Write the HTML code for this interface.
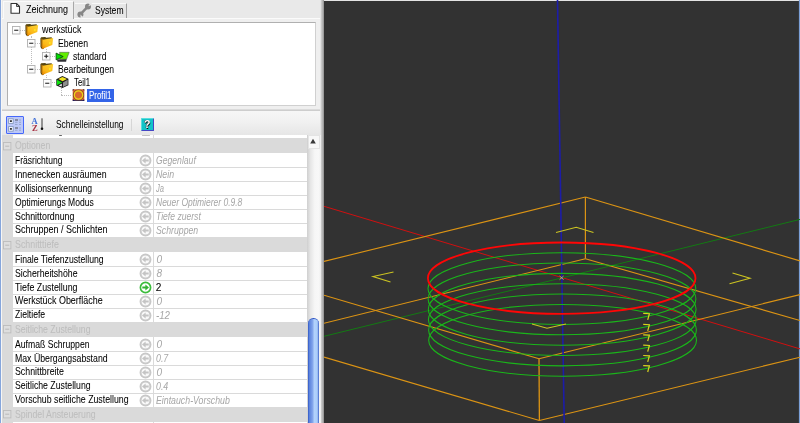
<!DOCTYPE html><html><head><meta charset="utf-8"><title>CAM</title><style>

html,body{margin:0;padding:0}
body{width:800px;height:423px;overflow:hidden;background:#ebebeb;font-family:"Liberation Sans", sans-serif;font-size:10.1px;color:#000;position:relative}
.abs{position:absolute}
.t{position:absolute;-webkit-text-stroke:0.05px currentColor;transform-origin:0 50%;white-space:nowrap;line-height:12px;height:12px}
.row{position:absolute;left:13px;width:294.3px;background:#fff}
.cat{position:absolute;left:2px;width:306px;background:#dadada}
.val{color:#a6a6a6;font-style:italic;-webkit-text-stroke:0 !important}
.cattxt{color:#bdbdbd}

</style></head><body><div id="wrap" style="position:absolute;left:0;top:0;width:800px;height:423px;will-change:transform">
<div class="abs" style="left:0;top:0;width:1px;height:423px;background:#86a6dc"></div>
<div class="abs" style="left:1px;top:0;width:1.5px;height:423px;background:#f6f6f6"></div>
<div class="abs" style="left:2px;top:0;width:318px;height:18px;background:#e9e9e9"></div>
<div class="abs" style="left:2px;top:17.5px;width:318px;height:92px;background:#efefef;border-top:1px solid #fbfbfb;box-sizing:border-box"></div>
<div class="abs" style="left:2.5px;top:1px;width:71px;height:17.5px;background:#efefef;border:1px solid #fafafa;border-bottom:none;border-right:1px solid #a8a8a8;box-sizing:border-box"></div>
<div class="abs" style="left:74.5px;top:2.5px;width:52.5px;height:15px;background:#e6e6e6;border-top:1px solid #f8f8f8;border-right:1px solid #a0a0a0;box-sizing:border-box"></div>
<svg class="abs" style="left:9px;top:2px" width="13" height="13" viewBox="0 0 13 13"><path d="M2 1.5 H7.5 L10.5 4.5 V11.2 H2 Z" fill="#fff" stroke="#333" stroke-width="1.1" stroke-linejoin="round"/><path d="M7.5 1.5 V4.5 H10.5" fill="none" stroke="#333" stroke-width="0.9"/></svg>
<svg class="abs" style="left:76px;top:3px" width="16" height="16" viewBox="0 0 16 16"><path d="M4.6 11.2 L11.8 3.7" stroke="#878787" stroke-width="2.5"/><circle cx="12" cy="3.4" r="3" fill="#878787"/><path d="M12.3 3.2 L14.6 -0.6 L16.6 1.4 Z" fill="#e6e6e6"/><circle cx="4.4" cy="11.4" r="3" fill="#878787"/><path d="M4.4 11.6 L4.6 15.5 L7.6 14.6 Z" fill="#e6e6e6"/></svg>
<span id="tab1" class="t " style="left:26.00px;top:4.00px;transform:scaleX(0.8910);">Zeichnung</span>
<span id="tab2" class="t " style="left:95.30px;top:5.30px;transform:scaleX(0.8468);">System</span>
<div class="abs" style="left:7px;top:21.5px;width:308.5px;height:84px;background:#fff;border:1px solid #b0b0b0;border-right-color:#d0d0d0;border-bottom-color:#d0d0d0;box-sizing:border-box"></div>
<div class="abs" style="left:20.0px;top:29.8px;height:0;width:5.0px;border-top:1px dotted #bdbdbd"></div>
<div class="abs" style="left:30.5px;top:36.0px;width:0;height:30.4px;border-left:1px dotted #bdbdbd"></div>
<div class="abs" style="left:35.0px;top:42.9px;height:0;width:5.0px;border-top:1px dotted #bdbdbd"></div>
<div class="abs" style="left:35.0px;top:68.9px;height:0;width:5.0px;border-top:1px dotted #bdbdbd"></div>
<div class="abs" style="left:45.8px;top:49.0px;width:0;height:3.4px;border-left:1px dotted #bdbdbd"></div>
<div class="abs" style="left:50.0px;top:55.9px;height:0;width:5.0px;border-top:1px dotted #bdbdbd"></div>
<div class="abs" style="left:45.8px;top:75.0px;width:0;height:3.3px;border-left:1px dotted #bdbdbd"></div>
<div class="abs" style="left:50.0px;top:81.8px;height:0;width:5.0px;border-top:1px dotted #bdbdbd"></div>
<div class="abs" style="left:61.0px;top:88.0px;width:0;height:7.2px;border-left:1px dotted #bdbdbd"></div>
<div class="abs" style="left:61.0px;top:94.7px;height:0;width:10.0px;border-top:1px dotted #bdbdbd"></div>
<svg class="abs" style="left:11.6px;top:25.9px" width="9" height="9" viewBox="0 0 9 9"><rect x="0.5" y="0.5" width="7.5" height="7.5" fill="#fdfdfd" stroke="#b0b0b0" stroke-width="0.9"/><path d="M2.2 4.25 H6.3" stroke="#202020" stroke-width="1.05"/></svg>
<svg class="abs" style="left:26.9px;top:38.9px" width="9" height="9" viewBox="0 0 9 9"><rect x="0.5" y="0.5" width="7.5" height="7.5" fill="#fdfdfd" stroke="#b0b0b0" stroke-width="0.9"/><path d="M2.2 4.25 H6.3" stroke="#202020" stroke-width="1.05"/></svg>
<svg class="abs" style="left:42.4px;top:52.0px" width="9" height="9" viewBox="0 0 9 9"><rect x="0.5" y="0.5" width="7.5" height="7.5" fill="#fdfdfd" stroke="#b0b0b0" stroke-width="0.9"/><path d="M2.2 4.25 H6.3" stroke="#202020" stroke-width="1.05"/><path d="M4.25 2.2 V6.3" stroke="#202020" stroke-width="1.05"/></svg>
<svg class="abs" style="left:26.9px;top:65.1px" width="9" height="9" viewBox="0 0 9 9"><rect x="0.5" y="0.5" width="7.5" height="7.5" fill="#fdfdfd" stroke="#b0b0b0" stroke-width="0.9"/><path d="M2.2 4.25 H6.3" stroke="#202020" stroke-width="1.05"/></svg>
<svg class="abs" style="left:42.6px;top:78.5px" width="9" height="9" viewBox="0 0 9 9"><rect x="0.5" y="0.5" width="7.5" height="7.5" fill="#fdfdfd" stroke="#b0b0b0" stroke-width="0.9"/><path d="M2.2 4.25 H6.3" stroke="#202020" stroke-width="1.05"/></svg>
<svg class="abs" style="left:24.5px;top:22.8px" width="15" height="14" viewBox="0 0 15 14"><defs><linearGradient id="fg274" x1="0.1" y1="1" x2="0.8" y2="0"><stop offset="0" stop-color="#ee8800"/><stop offset="0.35" stop-color="#fbb818"/><stop offset="1" stop-color="#ffd030"/></linearGradient></defs><path d="M0.4 2.2 L1.2 1.2 L5.2 0.9 L6.2 1.8 L11.6 1.2 L12.2 3 L3 13.2 L1.6 12.8 L0.5 11 Z" fill="#54440f"/><path d="M1.2 2.6 L3 3.2 L2.4 12 L1.2 10.6 Z" fill="#a86a08"/><path d="M2.5 3.7 L13.2 1.9 L12.3 9 L2.1 12.9 Z" fill="url(#fg274)"/><circle cx="9.9" cy="7" r="0.9" fill="#ffee20"/></svg>
<svg class="abs" style="left:39.5px;top:35.9px" width="15" height="14" viewBox="0 0 15 14"><defs><linearGradient id="fg437" x1="0.1" y1="1" x2="0.8" y2="0"><stop offset="0" stop-color="#ee8800"/><stop offset="0.35" stop-color="#fbb818"/><stop offset="1" stop-color="#ffd030"/></linearGradient></defs><path d="M0.4 2.2 L1.2 1.2 L5.2 0.9 L6.2 1.8 L11.6 1.2 L12.2 3 L3 13.2 L1.6 12.8 L0.5 11 Z" fill="#54440f"/><path d="M1.2 2.6 L3 3.2 L2.4 12 L1.2 10.6 Z" fill="#a86a08"/><path d="M2.5 3.7 L13.2 1.9 L12.3 9 L2.1 12.9 Z" fill="url(#fg437)"/><circle cx="9.9" cy="7" r="0.9" fill="#ffee20"/></svg>
<svg class="abs" style="left:39.5px;top:61.9px" width="15" height="14" viewBox="0 0 15 14"><defs><linearGradient id="fg463" x1="0.1" y1="1" x2="0.8" y2="0"><stop offset="0" stop-color="#ee8800"/><stop offset="0.35" stop-color="#fbb818"/><stop offset="1" stop-color="#ffd030"/></linearGradient></defs><path d="M0.4 2.2 L1.2 1.2 L5.2 0.9 L6.2 1.8 L11.6 1.2 L12.2 3 L3 13.2 L1.6 12.8 L0.5 11 Z" fill="#54440f"/><path d="M1.2 2.6 L3 3.2 L2.4 12 L1.2 10.6 Z" fill="#a86a08"/><path d="M2.5 3.7 L13.2 1.9 L12.3 9 L2.1 12.9 Z" fill="url(#fg463)"/><circle cx="9.9" cy="7" r="0.9" fill="#ffee20"/></svg>
<svg class="abs" style="left:54.5px;top:49.9px" width="15" height="13" viewBox="0 0 15 13"><path d="M2 9.6 L11.6 9 L11.1 11.7 L2.6 11.7 Z" fill="#2e2e34"/><path d="M4.6 2.3 L14.2 2.3 L11.6 9.2 L5 9.2 Z" fill="#62ee00" stroke="#4a4456" stroke-width="0.5"/><path d="M1.1 3.1 L1.1 9.9 L8.2 6.6 Z" fill="#00de00" stroke="#0a3c0a" stroke-width="0.8" stroke-linejoin="round"/></svg>
<svg class="abs" style="left:54.5px;top:75.3px" width="15" height="14" viewBox="0 0 15 14"><path d="M1.3 4.2 L7.4 1.1 L13.4 3.8 L13.4 10.2 L7.5 12.9 L1.3 10.4 Z" fill="#1c1c1c"/><path d="M3.4 4.1 L7.4 1.9 L12 4 L7.5 6.2 Z" fill="#f2e21e"/><path d="M1.9 4.8 L1.9 10.3 L7.1 7.6 Z" fill="#10e010"/><path d="M8 7.4 L12.7 4.8 L12.7 9.7 L8 12 Z" fill="#8e8e8e"/><path d="M3.6 10.4 L6.8 8.8 L6.8 11.6 Z" fill="#e8e8e8"/></svg>
<svg class="abs" style="left:71.5px;top:88.2px" width="14" height="14" viewBox="0 0 14 14"><rect x="0.7" y="1.3" width="11.6" height="11.6" fill="#d4622a"/><path d="M0.7 12.9 H12.3 V11.2 L10.4 12.2 H2.6 L0.7 11.2 Z" fill="#1c1c5c"/><path d="M0.7 1.3 H2.4 L0.7 3 Z M12.3 1.3 V3 L10.6 1.3 Z" fill="#3a3050"/><circle cx="6.5" cy="7" r="5.2" fill="none" stroke="#4a3428" stroke-width="0.6"/><circle cx="6.5" cy="7" r="4.2" fill="#d8682e" stroke="#ecd418" stroke-width="1.2"/></svg>
<span id="tr0" class="t " style="left:42.00px;top:24.40px;transform:scaleX(0.8758);">werkstück</span>
<span id="tr1" class="t " style="left:57.50px;top:37.80px;transform:scaleX(0.8618);">Ebenen</span>
<span id="tr2" class="t " style="left:72.50px;top:50.80px;transform:scaleX(0.8528);">standard</span>
<span id="tr3" class="t " style="left:58.00px;top:64.00px;transform:scaleX(0.8527);">Bearbeitungen</span>
<span id="tr4" class="t " style="left:73.80px;top:77.10px;transform:scaleX(0.7705);">Teil1</span>
<div class="abs" style="left:86.8px;top:89px;width:27.2px;height:12.5px;background:#3364e8"></div>
<span id="tr5" class="t " style="left:89.00px;top:89.90px;transform:scaleX(0.7860);color:#fff">Profil1</span>
<div class="abs" style="left:2px;top:108.8px;width:318px;height:3.2px;background:linear-gradient(#e4e4e4,#cccccc 45%,#cfcfcf 60%,#e6e6e6)"></div>
<div class="abs" style="left:2px;top:111.2px;width:318px;height:23.5px;background:linear-gradient(#f6f6f6,#f0f0f0 50%,#e6e6e6)"></div>
<div class="abs" style="left:5.8px;top:116px;width:18.7px;height:18px;background:#bcc8f8;border:1px solid #4668fa;box-sizing:border-box;border-radius:1px"></div>
<svg class="abs" style="left:7px;top:117px" width="17" height="16" viewBox="0 0 17 16"><rect x="1.6" y="1.8" width="4.6" height="4.6" fill="#eef2ff" stroke="#7f93b8" stroke-width="0.8"/><rect x="2.9" y="3.3" width="2" height="1.6" fill="#222"/><rect x="1.6" y="9.6" width="4.6" height="4.6" fill="#eef2ff" stroke="#7f93b8" stroke-width="0.8"/><rect x="2.9" y="11.1" width="2" height="1.6" fill="#222"/><path d="M8 3 H11 M8 11 H11" stroke="#444" stroke-width="0.9"/><path d="M8 5.3 H10.5 M12 3 H14 M12 5.3 H14 M8 7.5 H10.5 M12 7.5 H14 M8 13.2 H10.5 M12 11 H14 M12 13.2 H14" stroke="#93a3c8" stroke-width="0.9"/></svg>
<span class="t" style="left:31.5px;top:116.2px;font-family:'Liberation Serif',serif;font-weight:bold;font-size:8.5px;color:#3f6fd8;line-height:10px;height:10px">A</span>
<span class="t" style="left:32px;top:122.8px;font-family:'Liberation Serif',serif;font-weight:bold;font-size:8.5px;color:#a83244;line-height:10px;height:10px">Z</span>
<svg class="abs" style="left:39px;top:117px" width="6" height="15" viewBox="0 0 6 15"><path d="M3 1.3 V12" stroke="#222" stroke-width="0.9"/><circle cx="3" cy="11.7" r="1.3" fill="#111"/></svg>
<span id="tb" class="t " style="left:55.50px;top:119.40px;transform:scaleX(0.8295);-webkit-text-stroke:0">Schnelleinstellung</span>
<div class="abs" style="left:131.2px;top:119px;width:1px;height:12px;background:#d6d6d6"></div>
<div class="abs" style="left:141px;top:118.2px;width:12.6px;height:12.5px;background:#12c4c8;border-right:1.2px solid #4646c4;border-bottom:1.2px solid #4646c4;border-top:0.6px solid #5adcdc;border-left:0.6px solid #5adcdc;box-sizing:border-box;border-radius:1px"></div>
<span class="t" style="left:143.9px;top:118.4px;font-weight:bold;font-size:10.5px;color:#fff;text-shadow:0.7px 0.7px 0 #111,-0.3px 0 0 #333;-webkit-text-stroke:0">?</span>
<div class="abs" style="left:2px;top:134.7px;width:305.3px;height:289px;background:#dadada"></div>
<div class="row" style="top:134.7px;height:3.3px"></div>
<div class="abs" style="left:59px;top:135.2px;width:3px;height:1.2px;background:#666;border-radius:1px"></div>
<div class="abs" style="left:141.5px;top:134.7px;width:8.5px;height:1.8px;border:1px solid #c4c4c4;border-top:none;border-radius:0 0 5px 5px;box-sizing:border-box"></div>
<svg class="abs" style="left:3px;top:141.6px" width="9" height="9" viewBox="0 0 9 9"><rect x="0.5" y="0.5" width="7.4" height="7.4" fill="#dedede" stroke="#bcbcbc" stroke-width="0.9"/><path d="M2.2 4.2 H6.2" stroke="#b4b4b4" stroke-width="0.9"/></svg>
<span id="c0" class="t cattxt" style="left:14.70px;top:139.80px;transform:scaleX(0.8616);">Optionen</span>
<div class="row" style="top:153.20px;height:14.00px"></div>
<span id="n1" class="t " style="left:14.60px;top:154.70px;transform:scaleX(0.8448);">Fräsrichtung</span>
<svg class="abs" style="left:139.3px;top:154.3px" width="13" height="13" viewBox="0 0 13 13"><circle cx="6.5" cy="6.5" r="4.95" fill="#f9f9f9" stroke="#c8c8c8" stroke-width="2"/><path d="M9.7 6.5 H5.4" fill="none" stroke="#c4c4c4" stroke-width="2"/><path d="M6.6 3.4 L3 6.5 L6.6 9.6 Z" fill="#c4c4c4"/></svg>
<span id="v1" class="t val" style="left:156.40px;top:155.10px;transform:scaleX(0.8542);">Gegenlauf</span>
<div class="row" style="top:167.15px;height:14.00px"></div>
<div class="abs" style="left:13px;top:167.00px;width:294.3px;height:1px;background:#dadada"></div>
<span id="n2" class="t " style="left:14.60px;top:168.65px;transform:scaleX(0.8673);">Innenecken ausräumen</span>
<svg class="abs" style="left:139.3px;top:168.2px" width="13" height="13" viewBox="0 0 13 13"><circle cx="6.5" cy="6.5" r="4.95" fill="#f9f9f9" stroke="#c8c8c8" stroke-width="2"/><path d="M9.7 6.5 H5.4" fill="none" stroke="#c4c4c4" stroke-width="2"/><path d="M6.6 3.4 L3 6.5 L6.6 9.6 Z" fill="#c4c4c4"/></svg>
<span id="v2" class="t val" style="left:156.40px;top:169.05px;transform:scaleX(0.8716);">Nein</span>
<div class="row" style="top:181.10px;height:14.00px"></div>
<div class="abs" style="left:13px;top:180.95px;width:294.3px;height:1px;background:#dadada"></div>
<span id="n3" class="t " style="left:14.60px;top:182.60px;transform:scaleX(0.8534);">Kollisionserkennung</span>
<svg class="abs" style="left:139.3px;top:182.2px" width="13" height="13" viewBox="0 0 13 13"><circle cx="6.5" cy="6.5" r="4.95" fill="#f9f9f9" stroke="#c8c8c8" stroke-width="2"/><path d="M9.7 6.5 H5.4" fill="none" stroke="#c4c4c4" stroke-width="2"/><path d="M6.6 3.4 L3 6.5 L6.6 9.6 Z" fill="#c4c4c4"/></svg>
<span id="v3" class="t val" style="left:156.40px;top:183.00px;transform:scaleX(0.7496);">Ja</span>
<div class="row" style="top:195.05px;height:14.00px"></div>
<div class="abs" style="left:13px;top:194.90px;width:294.3px;height:1px;background:#dadada"></div>
<span id="n4" class="t " style="left:14.60px;top:196.55px;transform:scaleX(0.8450);">Optimierungs Modus</span>
<svg class="abs" style="left:139.3px;top:196.1px" width="13" height="13" viewBox="0 0 13 13"><circle cx="6.5" cy="6.5" r="4.95" fill="#f9f9f9" stroke="#c8c8c8" stroke-width="2"/><path d="M9.7 6.5 H5.4" fill="none" stroke="#c4c4c4" stroke-width="2"/><path d="M6.6 3.4 L3 6.5 L6.6 9.6 Z" fill="#c4c4c4"/></svg>
<span id="v4" class="t val" style="left:156.40px;top:196.95px;transform:scaleX(0.8405);">Neuer Optimierer 0.9.8</span>
<div class="row" style="top:209.00px;height:14.00px"></div>
<div class="abs" style="left:13px;top:208.85px;width:294.3px;height:1px;background:#dadada"></div>
<span id="n5" class="t " style="left:14.60px;top:210.50px;transform:scaleX(0.8747);">Schnittordnung</span>
<svg class="abs" style="left:139.3px;top:210.1px" width="13" height="13" viewBox="0 0 13 13"><circle cx="6.5" cy="6.5" r="4.95" fill="#f9f9f9" stroke="#c8c8c8" stroke-width="2"/><path d="M9.7 6.5 H5.4" fill="none" stroke="#c4c4c4" stroke-width="2"/><path d="M6.6 3.4 L3 6.5 L6.6 9.6 Z" fill="#c4c4c4"/></svg>
<span id="v5" class="t val" style="left:156.40px;top:210.90px;transform:scaleX(0.8508);">Tiefe zuerst</span>
<div class="row" style="top:222.95px;height:14.00px"></div>
<div class="abs" style="left:13px;top:222.80px;width:294.3px;height:1px;background:#dadada"></div>
<span id="n6" class="t " style="left:14.60px;top:224.45px;transform:scaleX(0.8920);">Schruppen / Schlichten</span>
<svg class="abs" style="left:139.3px;top:224.0px" width="13" height="13" viewBox="0 0 13 13"><circle cx="6.5" cy="6.5" r="4.95" fill="#f9f9f9" stroke="#c8c8c8" stroke-width="2"/><path d="M9.7 6.5 H5.4" fill="none" stroke="#c4c4c4" stroke-width="2"/><path d="M6.6 3.4 L3 6.5 L6.6 9.6 Z" fill="#c4c4c4"/></svg>
<span id="v6" class="t val" style="left:156.40px;top:224.85px;transform:scaleX(0.8643);">Schruppen</span>
<svg class="abs" style="left:3px;top:240.5px" width="9" height="9" viewBox="0 0 9 9"><rect x="0.5" y="0.5" width="7.4" height="7.4" fill="#dedede" stroke="#bcbcbc" stroke-width="0.9"/><path d="M2.2 4.2 H6.2" stroke="#b4b4b4" stroke-width="0.9"/></svg>
<span id="c7" class="t cattxt" style="left:14.70px;top:238.70px;transform:scaleX(0.8771);">Schnitttiefe</span>
<div class="row" style="top:252.10px;height:14.00px"></div>
<span id="n8" class="t " style="left:14.60px;top:253.60px;transform:scaleX(0.8581);">Finale Tiefenzustellung</span>
<svg class="abs" style="left:139.3px;top:253.2px" width="13" height="13" viewBox="0 0 13 13"><circle cx="6.5" cy="6.5" r="4.95" fill="#f9f9f9" stroke="#c8c8c8" stroke-width="2"/><path d="M9.7 6.5 H5.4" fill="none" stroke="#c4c4c4" stroke-width="2"/><path d="M6.6 3.4 L3 6.5 L6.6 9.6 Z" fill="#c4c4c4"/></svg>
<span id="v8" class="t val" style="left:156.40px;top:254.00px;">0</span>
<div class="row" style="top:266.05px;height:14.00px"></div>
<div class="abs" style="left:13px;top:265.90px;width:294.3px;height:1px;background:#dadada"></div>
<span id="n9" class="t " style="left:14.60px;top:267.55px;transform:scaleX(0.8634);">Sicherheitshöhe</span>
<svg class="abs" style="left:139.3px;top:267.1px" width="13" height="13" viewBox="0 0 13 13"><circle cx="6.5" cy="6.5" r="4.95" fill="#f9f9f9" stroke="#c8c8c8" stroke-width="2"/><path d="M9.7 6.5 H5.4" fill="none" stroke="#c4c4c4" stroke-width="2"/><path d="M6.6 3.4 L3 6.5 L6.6 9.6 Z" fill="#c4c4c4"/></svg>
<span id="v9" class="t val" style="left:156.40px;top:267.95px;">8</span>
<div class="row" style="top:280.00px;height:14.00px"></div>
<div class="abs" style="left:13px;top:279.85px;width:294.3px;height:1px;background:#dadada"></div>
<span id="n10" class="t " style="left:14.60px;top:281.50px;transform:scaleX(0.8747);">Tiefe Zustellung</span>
<svg class="abs" style="left:139.3px;top:281.1px" width="13" height="13" viewBox="0 0 13 13"><circle cx="6.5" cy="6.5" r="5.1" fill="#fff" stroke="#3cbc3c" stroke-width="1.7"/><path d="M3.3 6.5 H7.6" fill="none" stroke="#34b434" stroke-width="2"/><path d="M6.4 3.4 L10 6.5 L6.4 9.6 Z" fill="#34b434"/></svg>
<span id="v10" class="t " style="left:155.70px;top:281.50px;color:#000">2</span>
<div class="row" style="top:293.95px;height:14.00px"></div>
<div class="abs" style="left:13px;top:293.80px;width:294.3px;height:1px;background:#dadada"></div>
<span id="n11" class="t " style="left:14.60px;top:295.45px;transform:scaleX(0.8839);">Werkstück Oberfläche</span>
<svg class="abs" style="left:139.3px;top:295.0px" width="13" height="13" viewBox="0 0 13 13"><circle cx="6.5" cy="6.5" r="4.95" fill="#f9f9f9" stroke="#c8c8c8" stroke-width="2"/><path d="M9.7 6.5 H5.4" fill="none" stroke="#c4c4c4" stroke-width="2"/><path d="M6.6 3.4 L3 6.5 L6.6 9.6 Z" fill="#c4c4c4"/></svg>
<span id="v11" class="t val" style="left:156.40px;top:295.85px;">0</span>
<div class="row" style="top:307.90px;height:14.00px"></div>
<div class="abs" style="left:13px;top:307.75px;width:294.3px;height:1px;background:#dadada"></div>
<span id="n12" class="t " style="left:14.60px;top:309.40px;transform:scaleX(0.8516);">Zieltiefe</span>
<svg class="abs" style="left:139.3px;top:309.0px" width="13" height="13" viewBox="0 0 13 13"><circle cx="6.5" cy="6.5" r="4.95" fill="#f9f9f9" stroke="#c8c8c8" stroke-width="2"/><path d="M9.7 6.5 H5.4" fill="none" stroke="#c4c4c4" stroke-width="2"/><path d="M6.6 3.4 L3 6.5 L6.6 9.6 Z" fill="#c4c4c4"/></svg>
<span id="v12" class="t val" style="left:156.40px;top:309.80px;transform:scaleX(0.9593);">-12</span>
<svg class="abs" style="left:3px;top:325.4px" width="9" height="9" viewBox="0 0 9 9"><rect x="0.5" y="0.5" width="7.4" height="7.4" fill="#dedede" stroke="#bcbcbc" stroke-width="0.9"/><path d="M2.2 4.2 H6.2" stroke="#b4b4b4" stroke-width="0.9"/></svg>
<span id="c13" class="t cattxt" style="left:14.70px;top:323.65px;transform:scaleX(0.8625);">Seitliche Zustellung</span>
<div class="row" style="top:337.05px;height:14.00px"></div>
<span id="n14" class="t " style="left:14.60px;top:338.55px;transform:scaleX(0.8566);">Aufmaß Schruppen</span>
<svg class="abs" style="left:139.3px;top:338.1px" width="13" height="13" viewBox="0 0 13 13"><circle cx="6.5" cy="6.5" r="4.95" fill="#f9f9f9" stroke="#c8c8c8" stroke-width="2"/><path d="M9.7 6.5 H5.4" fill="none" stroke="#c4c4c4" stroke-width="2"/><path d="M6.6 3.4 L3 6.5 L6.6 9.6 Z" fill="#c4c4c4"/></svg>
<span id="v14" class="t val" style="left:156.40px;top:338.95px;">0</span>
<div class="row" style="top:351.00px;height:14.00px"></div>
<div class="abs" style="left:13px;top:350.85px;width:294.3px;height:1px;background:#dadada"></div>
<span id="n15" class="t " style="left:14.60px;top:352.50px;transform:scaleX(0.8639);">Max Übergangsabstand</span>
<svg class="abs" style="left:139.3px;top:352.1px" width="13" height="13" viewBox="0 0 13 13"><circle cx="6.5" cy="6.5" r="4.95" fill="#f9f9f9" stroke="#c8c8c8" stroke-width="2"/><path d="M9.7 6.5 H5.4" fill="none" stroke="#c4c4c4" stroke-width="2"/><path d="M6.6 3.4 L3 6.5 L6.6 9.6 Z" fill="#c4c4c4"/></svg>
<span id="v15" class="t val" style="left:156.40px;top:352.90px;transform:scaleX(0.8756);">0.7</span>
<div class="row" style="top:364.95px;height:14.00px"></div>
<div class="abs" style="left:13px;top:364.80px;width:294.3px;height:1px;background:#dadada"></div>
<span id="n16" class="t " style="left:14.60px;top:366.45px;transform:scaleX(0.8697);">Schnittbreite</span>
<svg class="abs" style="left:139.3px;top:366.0px" width="13" height="13" viewBox="0 0 13 13"><circle cx="6.5" cy="6.5" r="4.95" fill="#f9f9f9" stroke="#c8c8c8" stroke-width="2"/><path d="M9.7 6.5 H5.4" fill="none" stroke="#c4c4c4" stroke-width="2"/><path d="M6.6 3.4 L3 6.5 L6.6 9.6 Z" fill="#c4c4c4"/></svg>
<span id="v16" class="t val" style="left:156.40px;top:366.85px;">0</span>
<div class="row" style="top:378.90px;height:14.00px"></div>
<div class="abs" style="left:13px;top:378.75px;width:294.3px;height:1px;background:#dadada"></div>
<span id="n17" class="t " style="left:14.60px;top:380.40px;transform:scaleX(0.8637);">Seitliche Zustellung</span>
<svg class="abs" style="left:139.3px;top:380.0px" width="13" height="13" viewBox="0 0 13 13"><circle cx="6.5" cy="6.5" r="4.95" fill="#f9f9f9" stroke="#c8c8c8" stroke-width="2"/><path d="M9.7 6.5 H5.4" fill="none" stroke="#c4c4c4" stroke-width="2"/><path d="M6.6 3.4 L3 6.5 L6.6 9.6 Z" fill="#c4c4c4"/></svg>
<span id="v17" class="t val" style="left:156.40px;top:380.80px;transform:scaleX(0.8756);">0.4</span>
<div class="row" style="top:392.85px;height:14.00px"></div>
<div class="abs" style="left:13px;top:392.70px;width:294.3px;height:1px;background:#dadada"></div>
<span id="n18" class="t " style="left:14.60px;top:394.35px;transform:scaleX(0.8689);">Vorschub seitliche Zustellung</span>
<svg class="abs" style="left:139.3px;top:393.9px" width="13" height="13" viewBox="0 0 13 13"><circle cx="6.5" cy="6.5" r="4.95" fill="#f9f9f9" stroke="#c8c8c8" stroke-width="2"/><path d="M9.7 6.5 H5.4" fill="none" stroke="#c4c4c4" stroke-width="2"/><path d="M6.6 3.4 L3 6.5 L6.6 9.6 Z" fill="#c4c4c4"/></svg>
<span id="v18" class="t val" style="left:156.40px;top:394.75px;transform:scaleX(0.8690);">Eintauch-Vorschub</span>
<svg class="abs" style="left:3px;top:410.4px" width="9" height="9" viewBox="0 0 9 9"><rect x="0.5" y="0.5" width="7.4" height="7.4" fill="#dedede" stroke="#bcbcbc" stroke-width="0.9"/><path d="M2.2 4.2 H6.2" stroke="#b4b4b4" stroke-width="0.9"/></svg>
<span id="c19" class="t cattxt" style="left:14.70px;top:408.60px;transform:scaleX(0.8651);">Spindel Ansteuerung</span>
<div class="row" style="top:422.00px;height:20px"></div>
<div class="abs" style="left:152.9px;top:134.7px;width:1px;height:289px;background:#dadada"></div>
<div class="abs" style="left:307.3px;top:134.7px;width:14px;height:289px;background:linear-gradient(90deg,#cfcfcf,#e6e6e6 25%,#f6f6f6 55%,#f8f8f8 85%,#ececec)"></div>
<div class="abs" style="left:308px;top:135.2px;width:11.6px;height:13.5px;background:#f8f8f8;border:1px solid #e4e4e4;box-sizing:border-box"></div>
<svg class="abs" style="left:309.4px;top:138px" width="8" height="7" viewBox="0 0 8 7"><path d="M4 0.8 L6.8 5.6 H1.2 Z" fill="#3a3a3a"/></svg>
<div class="abs" style="left:308.1px;top:318.3px;width:10.7px;height:110px;border-radius:5.3px 5.3px 0 0;background:linear-gradient(90deg,#2f55c4 0,#5a82dc 12%,#7fa2ea 40%,#b2d2fc 58%,#aacdfa 84%,#3a5ec4 100%);border-top:1.2px solid #3258c4;box-sizing:border-box"></div>
<div class="abs" style="left:321.2px;top:0;width:2.8px;height:423px;background:linear-gradient(90deg,#d0d0d0,#b4b4b4 50%,#8e8e8e)"></div>
<div class="abs" style="left:320px;top:0;width:1.4px;height:134.7px;background:#e2e2e2"></div>
<svg class="abs" style="left:324px;top:0" width="476" height="423" viewBox="324 0 476 423">
<rect x="324" y="0" width="476" height="423" fill="#323232"/>
<rect x="324" y="0" width="476" height="1" fill="#e4e4e4"/>
<rect x="798.9" y="0" width="1.1" height="423" fill="#7b9fd6"/>
<line x1="324.0" y1="206.3" x2="800.0" y2="348.9" stroke="#d01010" stroke-width="1.00" />
<line x1="324.0" y1="336.3" x2="800.0" y2="219.4" stroke="#137a13" stroke-width="1.00" />
<line x1="585.4" y1="197.0" x2="324.0" y2="261.4" stroke="#dc9414" stroke-width="1.10" />
<line x1="585.4" y1="197.0" x2="800.0" y2="260.9" stroke="#dc9414" stroke-width="1.10" />
<line x1="585.4" y1="197.0" x2="585.4" y2="258.7" stroke="#dc9414" stroke-width="1.20" />
<line x1="585.4" y1="258.7" x2="324.0" y2="323.2" stroke="#dc9414" stroke-width="1.10" />
<line x1="585.4" y1="258.7" x2="800.0" y2="320.5" stroke="#dc9414" stroke-width="1.10" />
<line x1="539.0" y1="358.7" x2="324.0" y2="295.3" stroke="#dc9414" stroke-width="1.10" />
<line x1="539.0" y1="358.7" x2="800.0" y2="294.6" stroke="#dc9414" stroke-width="1.10" />
<line x1="539.0" y1="358.7" x2="539.4" y2="420.5" stroke="#dc9414" stroke-width="1.30" />
<line x1="539.4" y1="420.5" x2="324.0" y2="357.1" stroke="#dc9414" stroke-width="1.10" />
<line x1="539.4" y1="420.5" x2="800.0" y2="357.2" stroke="#dc9414" stroke-width="1.10" />
<line x1="557.5" y1="0.0" x2="564.2" y2="423.0" stroke="#1c1ca8" stroke-width="1.60" />
<ellipse cx="561.9" cy="288.55" rx="133.9" ry="35.9" fill="none" stroke="#1ab61a" stroke-width="1.05"/>
<ellipse cx="562.0" cy="298.90" rx="133.9" ry="35.9" fill="none" stroke="#1ab61a" stroke-width="1.05"/>
<ellipse cx="562.2" cy="309.25" rx="133.9" ry="35.9" fill="none" stroke="#1ab61a" stroke-width="1.05"/>
<ellipse cx="562.3" cy="319.60" rx="133.9" ry="35.9" fill="none" stroke="#1ab61a" stroke-width="1.05"/>
<ellipse cx="562.5" cy="329.95" rx="133.9" ry="35.9" fill="none" stroke="#1ab61a" stroke-width="1.05"/>
<ellipse cx="562.6" cy="340.30" rx="133.9" ry="35.9" fill="none" stroke="#1ab61a" stroke-width="1.05"/>
<ellipse cx="561.7" cy="278.2" rx="133.8" ry="35.7" fill="none" stroke="#ff0606" stroke-width="1.8"/>
<path d="M559.6 276 L563.6 279.6 M563.6 276 L559.6 279.6" stroke="#d8c070" stroke-width="0.8"/>
<path d="M556 232.5 L576.2 227.2 L593.5 232.5" fill="none" stroke="#ccc422" stroke-width="1.1"/>
<path d="M532 324 L547 328.2 L566 324" fill="none" stroke="#ccc422" stroke-width="1.1"/>
<path d="M393.5 272 L373 276.5 L390.5 282" fill="none" stroke="#ccc422" stroke-width="1.1"/>
<path d="M732.5 273 L750 278.2 L729.5 283.8" fill="none" stroke="#ccc422" stroke-width="1.1"/>
<path d="M643.2 313.4 L649.4 313.7 L647.7 319.8" fill="none" stroke="#d8d41e" stroke-width="1.2"/>
<path d="M643.2 324.4 L649.4 324.7 L647.7 330.8" fill="none" stroke="#d8d41e" stroke-width="1.2"/>
<path d="M643.2 334.8 L649.4 335.1 L647.7 341.2" fill="none" stroke="#d8d41e" stroke-width="1.2"/>
<path d="M643.2 345.2 L649.4 345.5 L647.7 351.6" fill="none" stroke="#d8d41e" stroke-width="1.2"/>
<path d="M643.2 355.5 L649.4 355.8 L647.7 361.9" fill="none" stroke="#d8d41e" stroke-width="1.2"/>
<path d="M643.2 365.6 L649.4 365.9 L647.7 372.0" fill="none" stroke="#d8d41e" stroke-width="1.2"/>
</svg>
</div></body></html>
